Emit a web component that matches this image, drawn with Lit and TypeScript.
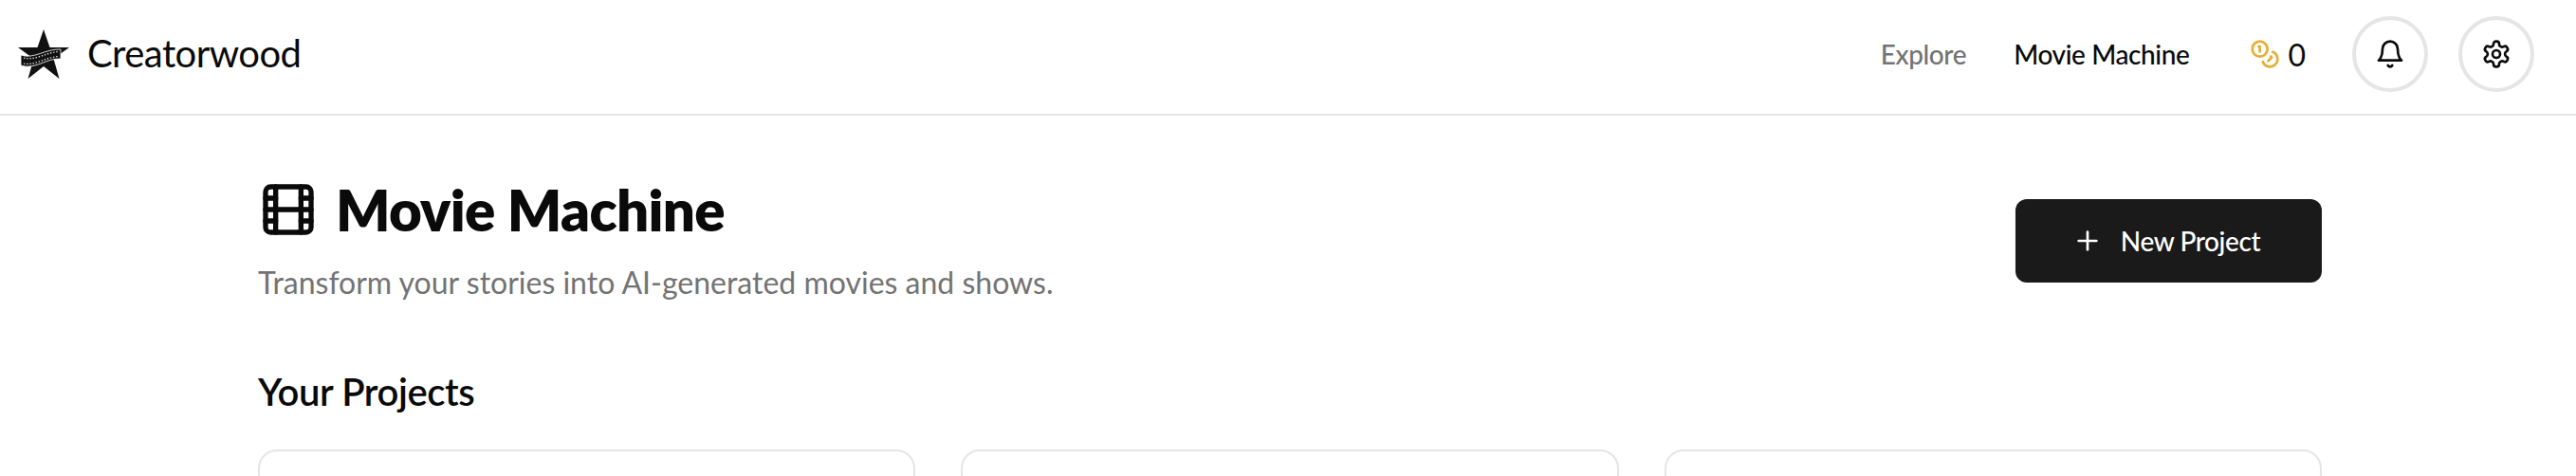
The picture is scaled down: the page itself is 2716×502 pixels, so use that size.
import { LitElement, html, css, svg } from "lit";
import { customElement } from "lit/decorators.js";

const icon = (size: number, paths: unknown, cls = "") => html`<svg class=${cls} width=${size} height=${size} viewBox="0 0 24 24" fill="none" stroke="currentColor" stroke-width="2" stroke-linecap="round" stroke-linejoin="round">${paths}</svg>`;

const film = svg`<rect x="3" y="3" width="18" height="18" rx="2"/><path d="M7 3v18"/><path d="M3 7.5h4"/><path d="M3 12h18"/><path d="M3 16.5h4"/><path d="M17 3v18"/><path d="M17 7.5h4"/><path d="M17 16.5h4"/>`;
const coins = svg`<circle cx="8" cy="8" r="6"/><path d="M18.09 10.37A6 6 0 1 1 10.34 18"/><path d="M7 6h1v4"/><path d="m16.71 13.88.7.71-2.82 2.82"/>`;
const bell = svg`<path d="M6 8a6 6 0 0 1 12 0c0 7 3 9 3 9H3s3-2 3-9"/><path d="M10.3 21a1.94 1.94 0 0 0 3.4 0"/>`;
const gear = svg`<path d="M12.22 2h-.44a2 2 0 0 0-2 2v.18a2 2 0 0 1-1 1.73l-.43.25a2 2 0 0 1-2 0l-.15-.08a2 2 0 0 0-2.73.73l-.22.38a2 2 0 0 0 .73 2.73l.15.1a2 2 0 0 1 1 1.72v.51a2 2 0 0 1-1 1.74l-.15.09a2 2 0 0 0-.73 2.73l.22.38a2 2 0 0 0 2.73.73l.15-.08a2 2 0 0 1 2 0l.43.25a2 2 0 0 1 1 1.73V20a2 2 0 0 0 2 2h.44a2 2 0 0 0 2-2v-.18a2 2 0 0 1 1-1.73l.43-.25a2 2 0 0 1 2 0l.15.08a2 2 0 0 0 2.73-.73l.22-.39a2 2 0 0 0-.73-2.73l-.15-.08a2 2 0 0 1-1-1.74v-.5a2 2 0 0 1 1-1.74l.15-.09a2 2 0 0 0 .73-2.73l-.22-.38a2 2 0 0 0-2.73-.73l-.15.08a2 2 0 0 1-2 0l-.43-.25a2 2 0 0 1-1-1.73V4a2 2 0 0 0-2-2z"/><circle cx="12" cy="12" r="3"/>`;
const plus = svg`<path d="M5 12h14"/><path d="M12 5v14"/>`;

@customElement("app-root")
export class AppRoot extends LitElement {
  static styles = css`
    :host { display: block; height: 100vh; overflow: hidden; background: #fff; color: #0a0a0a; font-family: "Lato", "Inter", sans-serif; }
    svg { display: block; flex: none; }
    .topbar { display: flex; align-items: center; justify-content: space-between; height: 122px; padding: 0 44px 6px 19px; box-sizing: border-box; border-bottom: 2px solid #e5e5e5; }
    .brand { display: flex; align-items: center; gap: 19px; }
    .brand-name { font-size: 40px; letter-spacing: -0.55px; line-height: 46px; padding-bottom: 2px; }
    .right { display: flex; align-items: center; }
    .link { font-size: 28px; font-weight: 500; line-height: 36px; letter-spacing: -0.4px; }
    .muted { color: #737373; margin-right: 50px; }
    .credits { display: flex; align-items: center; gap: 8px; margin-left: 64px; font-size: 32px; margin-right: 49px; }
    .coin { color: #e5ae32; }
    .round { width: 80px; height: 80px; box-sizing: border-box; border: 4px solid #e5e5e5; border-radius: 50%; display: flex; align-items: center; justify-content: center; }
    .round + .round { margin-left: 32px; }
    main { padding: 64px 268px 0 272px; }
    .hero { display: flex; justify-content: space-between; align-items: center; }
    .title-row { display: flex; align-items: center; gap: 18px; }
    h1 { margin: 0; font-size: 60px; line-height: 70px; font-weight: 800; letter-spacing: -0.7px; }
    .sub { margin: 20px 0 0; font-size: 32px; line-height: 44px; color: #737373; letter-spacing: 0; }
    .new { display: flex; align-items: center; justify-content: center; gap: 19px; width: 323px; height: 88px; margin-top: 1px; border: 0; border-radius: 12px; background: #1a1a1a; color: #fff; font: 500 28px "Lato", sans-serif; letter-spacing: -0.4px; padding: 0 11px 0 6px; }
    h2 { margin: 69px 0 0; font-size: 40px; line-height: 48px; font-weight: 600; letter-spacing: -0.4px; }
    .grid { display: grid; grid-template-columns: repeat(3, 1fr); gap: 48px; margin-top: 37px; }
    .card { height: 300px; border: 2px solid #e5e5e5; border-radius: 20px; box-sizing: border-box; background: #fff; }
  `;

  render() {
    return html`
      <header class="topbar">
        <div class="brand">
          <svg width="54" height="52" viewBox="0 0 54 52">
            <path d="M27 0 33.5 19 54 19 37.5 31 43.5 52 27 39 10.5 52 16.5 31 0 19 20.5 19Z" fill="#111"/>
            <path d="M3 27C16 32 30 20 45 21V31C30 30 18 43 3 38Z" fill="#111" stroke="#fff" stroke-width="0.8"/>
            <path d="M6 30C18 33.5 30 24 43 23.5M6 36C18 38.5 30 29 43 28.5" fill="none" stroke="#fff" stroke-width="1.2" stroke-dasharray="1.4 1.8"/>
          </svg>
          <span class="brand-name">Creatorwood</span>
        </div>
        <nav class="right">
          <span class="link muted">Explore</span>
          <span class="link">Movie Machine</span>
          <div class="credits">${icon(32, coins, "coin")}<span>0</span></div>
          <div class="round">${icon(32, bell)}</div>
          <div class="round">${icon(32, gear)}</div>
        </nav>
      </header>
      <main>
        <section class="hero">
          <div>
            <div class="title-row">${icon(64, film)}<h1>Movie Machine</h1></div>
            <p class="sub">Transform your stories into AI-generated movies and shows.</p>
          </div>
          <button class="new">${icon(32, plus)}<span>New Project</span></button>
        </section>
        <h2>Your Projects</h2>
        <div class="grid"><div class="card"></div><div class="card"></div><div class="card"></div></div>
      </main>
    `;
  }
}
